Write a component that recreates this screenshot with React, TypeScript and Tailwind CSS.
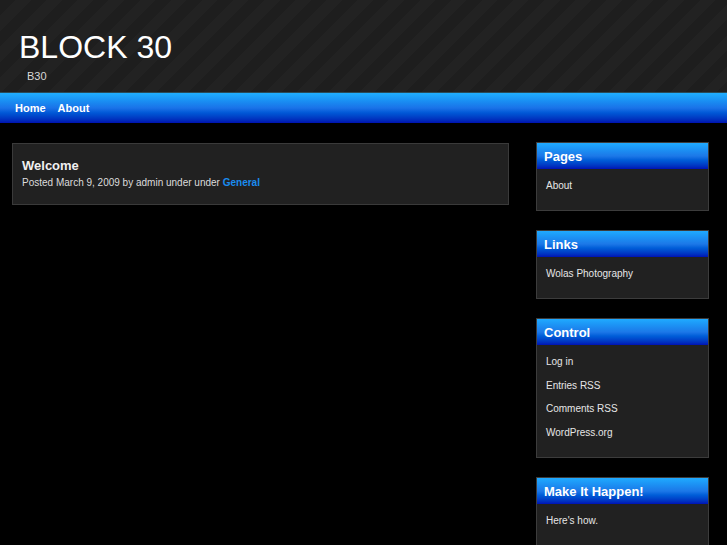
import React from "react";

const font = { fontFamily: '"Liberation Sans", Arial, Helvetica, sans-serif' };

function Widget({ title, items }: { title: string; items: string[] }) {
  return (
    <div className="border border-[#3c3c3c] bg-[#212121]">
      <div className="h-[26px] bg-gradient-to-b from-[#20aaff] via-[#1c78e8] to-[#0010b4] pl-[7px] text-[13px] font-bold leading-[27px] text-white">
        {title}
      </div>
      <ul className="flex flex-col gap-[11.5px] pl-[9px] pt-[11px] pb-[18px] text-[10px] leading-[12px] text-[#e6e6e6]">
        {items.map((i) => (
          <li key={i}>{i}</li>
        ))}
      </ul>
    </div>
  );
}

export default function App() {
  return (
    <div style={font} className="min-h-[545px] w-full overflow-hidden bg-black">
      <header className="h-[92px] bg-[repeating-linear-gradient(135deg,#1e1e1e_0px,#1e1e1e_11px,#222222_11px,#222222_22px)] pl-[19px] pt-[30px]">
        <h1 className="text-[32px] leading-[34px] text-white">BLOCK 30</h1>
        <p className="mt-[6px] pl-[8px] text-[11px] leading-[12px] text-[#d8d8d8]">B30</p>
      </header>
      <div className="h-px bg-[#2a4a58]" />
      <nav className="flex h-[30px] items-center gap-[12px] bg-gradient-to-b from-[#20aeff] via-[#1a72e8] to-[#0010b0] pl-[15px] text-[11px] font-bold text-white">
        <span>Home</span>
        <span>About</span>
      </nav>
      <div className="flex pt-[19px]">
        <main className="ml-[12px] w-[497px]">
          <div className="mt-px border border-[#3a3a3a] bg-[#212121] pl-[9px] pt-[14px] pb-[15px]">
            <h2 className="text-[13px] font-bold leading-[16px] text-[#f0f0f0]">Welcome</h2>
            <p className="mt-[3px] text-[10px] leading-[12px] text-[#dcdcdc]">
              Posted March 9, 2009 by admin under under{" "}
              <span className="font-bold text-[#1a8cf0]">General</span>
            </p>
          </div>
        </main>
        <aside className="ml-[27px] flex w-[173px] flex-col gap-[19px]">
          <Widget title="Pages" items={["About"]} />
          <Widget title="Links" items={["Wolas Photography"]} />
          <Widget title="Control" items={["Log in", "Entries RSS", "Comments RSS", "WordPress.org"]} />
          <Widget title="Make It Happen!" items={["Here's how."]} />
        </aside>
      </div>
    </div>
  );
}
